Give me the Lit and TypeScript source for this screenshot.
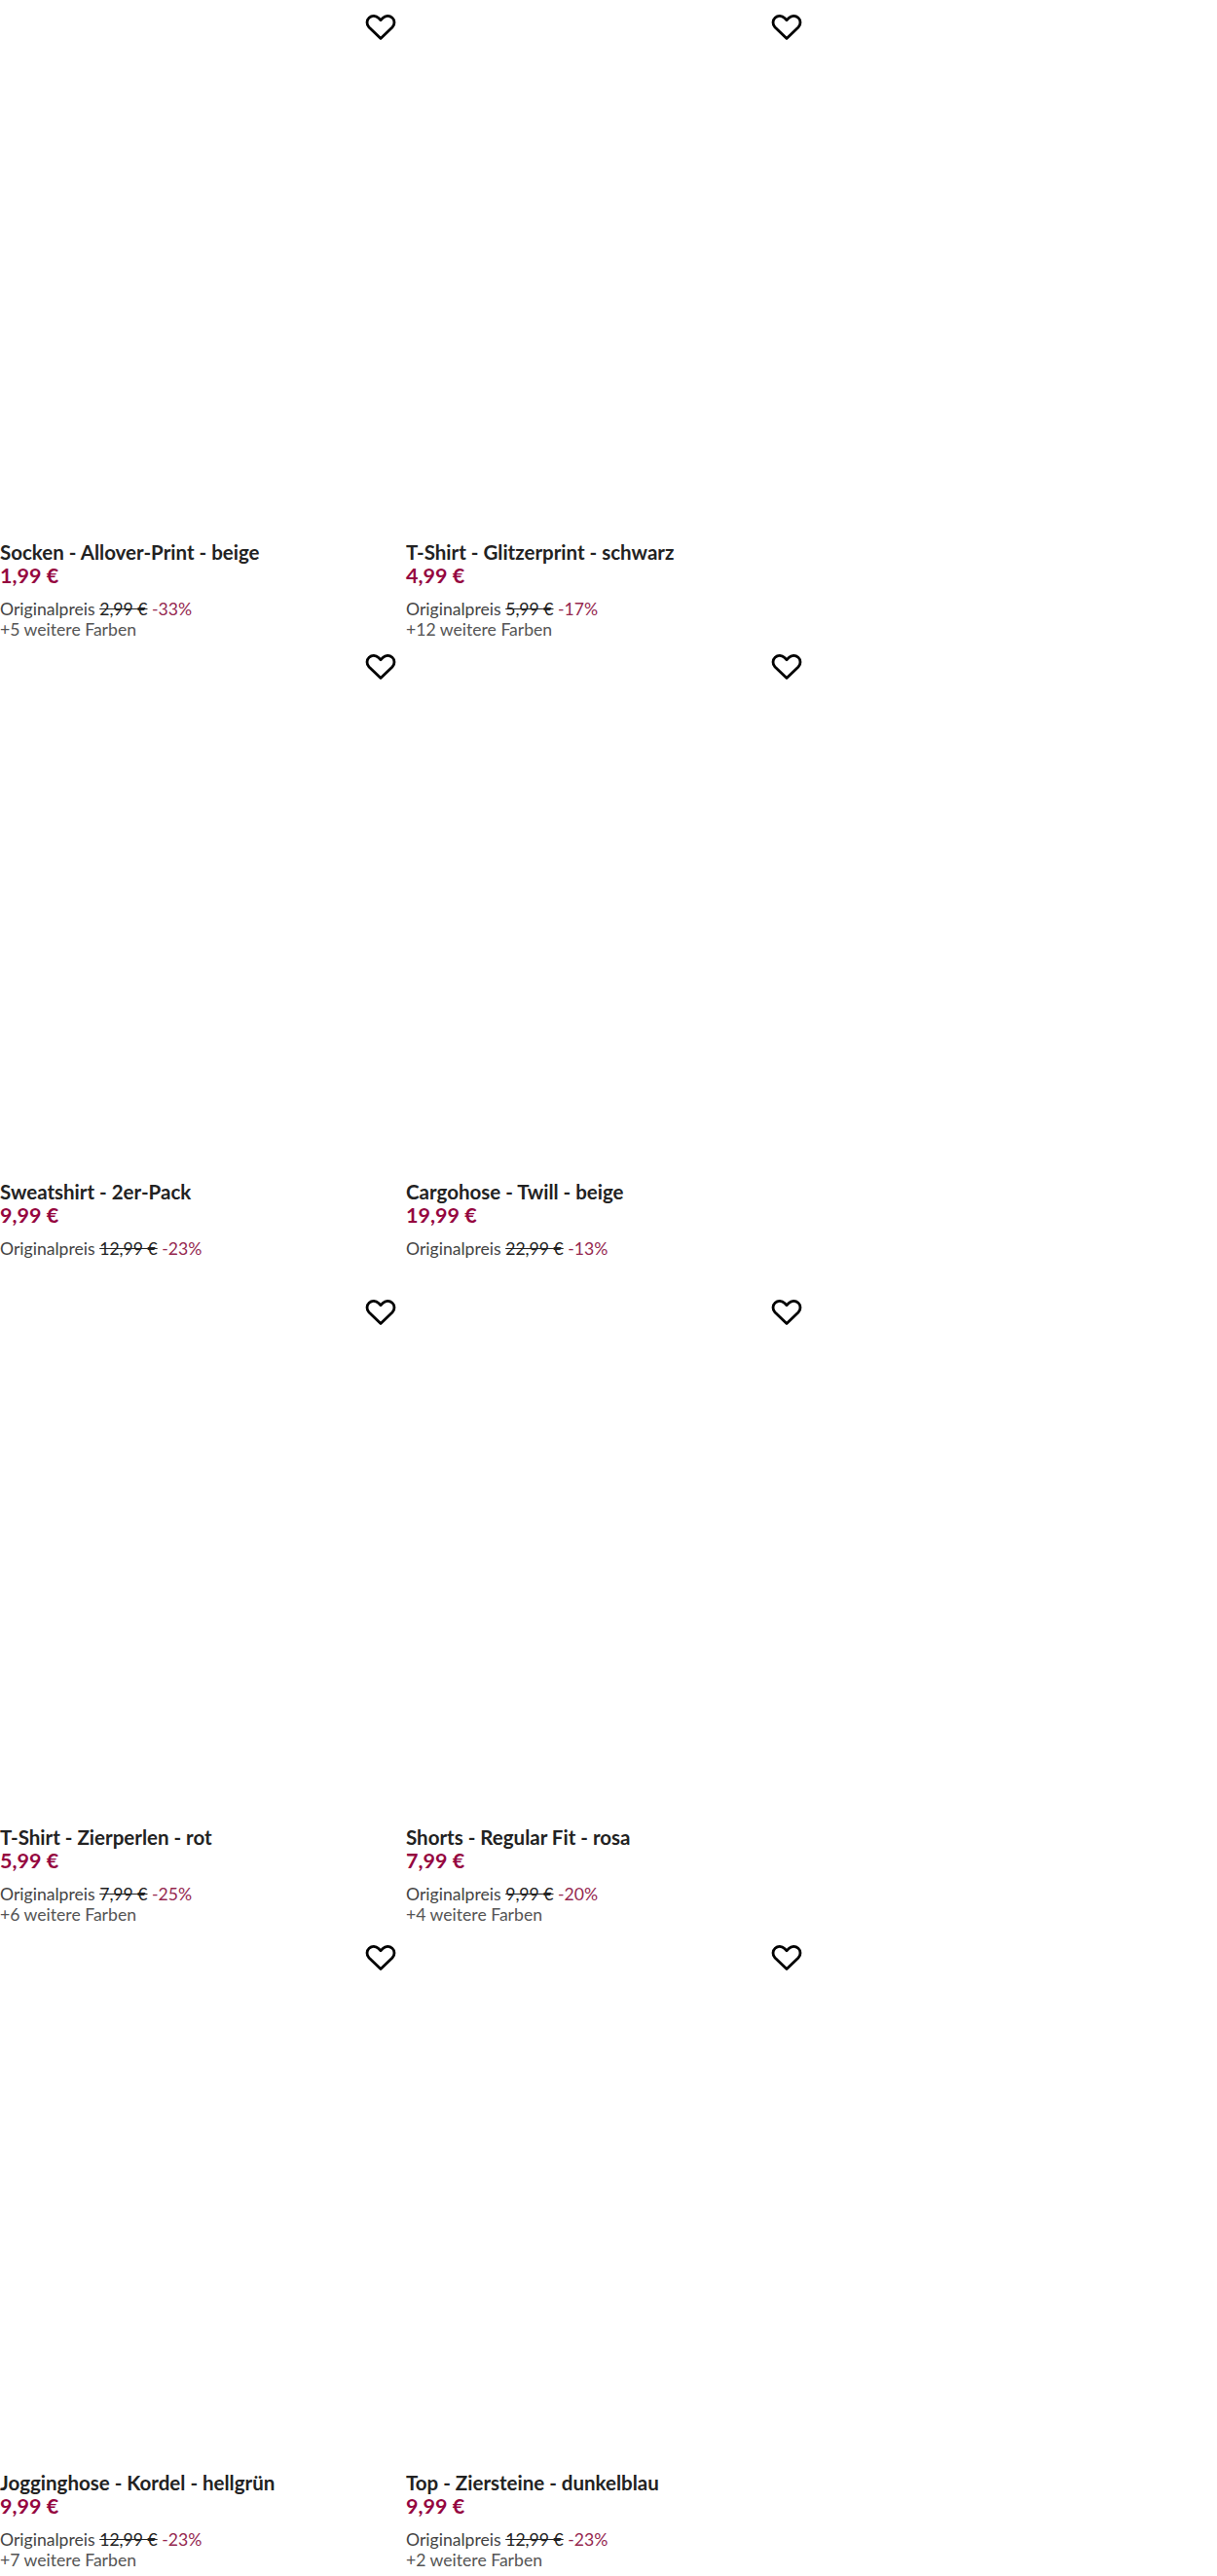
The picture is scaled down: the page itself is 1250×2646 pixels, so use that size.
import { LitElement, html, css } from "lit";
import { customElement } from "lit/decorators.js";

type P = { t: string; p: string; o: string; d: string; c?: number };
const items: P[] = [
  { t: "Socken - Allover-Print - beige", p: "1,99 €", o: "2,99 €", d: "-33%", c: 5 },
  { t: "T-Shirt - Glitzerprint - schwarz", p: "4,99 €", o: "5,99 €", d: "-17%", c: 12 },
  { t: "Sweatshirt - 2er-Pack", p: "9,99 €", o: "12,99 €", d: "-23%" },
  { t: "Cargohose - Twill - beige", p: "19,99 €", o: "22,99 €", d: "-13%" },
  { t: "T-Shirt - Zierperlen - rot", p: "5,99 €", o: "7,99 €", d: "-25%", c: 6 },
  { t: "Shorts - Regular Fit - rosa", p: "7,99 €", o: "9,99 €", d: "-20%", c: 4 },
  { t: "Jogginghose - Kordel - hellgrün", p: "9,99 €", o: "12,99 €", d: "-23%", c: 7 },
  { t: "Top - Ziersteine - dunkelblau", p: "9,99 €", o: "12,99 €", d: "-23%", c: 2 },
];

@customElement("app-root")
export class AppRoot extends LitElement {
  static styles = css`
    :host { display: block; background: #fff; font-family: "Lato", sans-serif; color: #222; }
    .grid { display: grid; grid-template-columns: repeat(2, 417px); grid-template-rows: 657px 663px 663px 663px; height: 2646px; overflow: hidden; }
    .card { position: relative; display: flex; flex-direction: column; }
    .img { height: 555px; flex: none; }
    .heart { position: absolute; top: 15px; left: 376px; width: 30px; height: 26px; overflow: visible; }
    .t { font-size: 20.5px; line-height: 24px; font-weight: 700; white-space: nowrap; }
    .p { font-size: 21.5px; line-height: 25px; font-weight: 700; color: #95063f; }
    .o { font-size: 17.6px; line-height: 21px; margin-top: 11px; color: #444; }
    .o s { color: #222; }
    .o span { color: #95284f; }
    .c { font-size: 17.6px; line-height: 21px; color: #555; }
  `;
  render() {
    return html`<div class="grid">
      ${items.map(
        (i) => html`<div class="card">
          <div class="img"></div>
          <svg class="heart" viewBox="0 0 30 26" fill="none" stroke="#000" stroke-width="2.8" stroke-linejoin="round">
            <path d="M15 24.6 3 13C.3 10.200.4 5.600 3.100 3.200c2.900-2.500 7-2.200 9.700.4L15 5.800l2.200-2.200c2.700-2.600 6.800-2.900 9.700-.4 2.700 2.400 2.800 7 .1 9.800Z"/>
          </svg>
          <div class="t">${i.t}</div>
          <div class="p">${i.p}</div>
          <div class="o">Originalpreis <s>${i.o}</s> <span>${i.d}</span></div>
          ${i.c ? html`<div class="c">+${i.c} weitere Farben</div>` : ""}
        </div>`
      )}
    </div>`;
  }
}
